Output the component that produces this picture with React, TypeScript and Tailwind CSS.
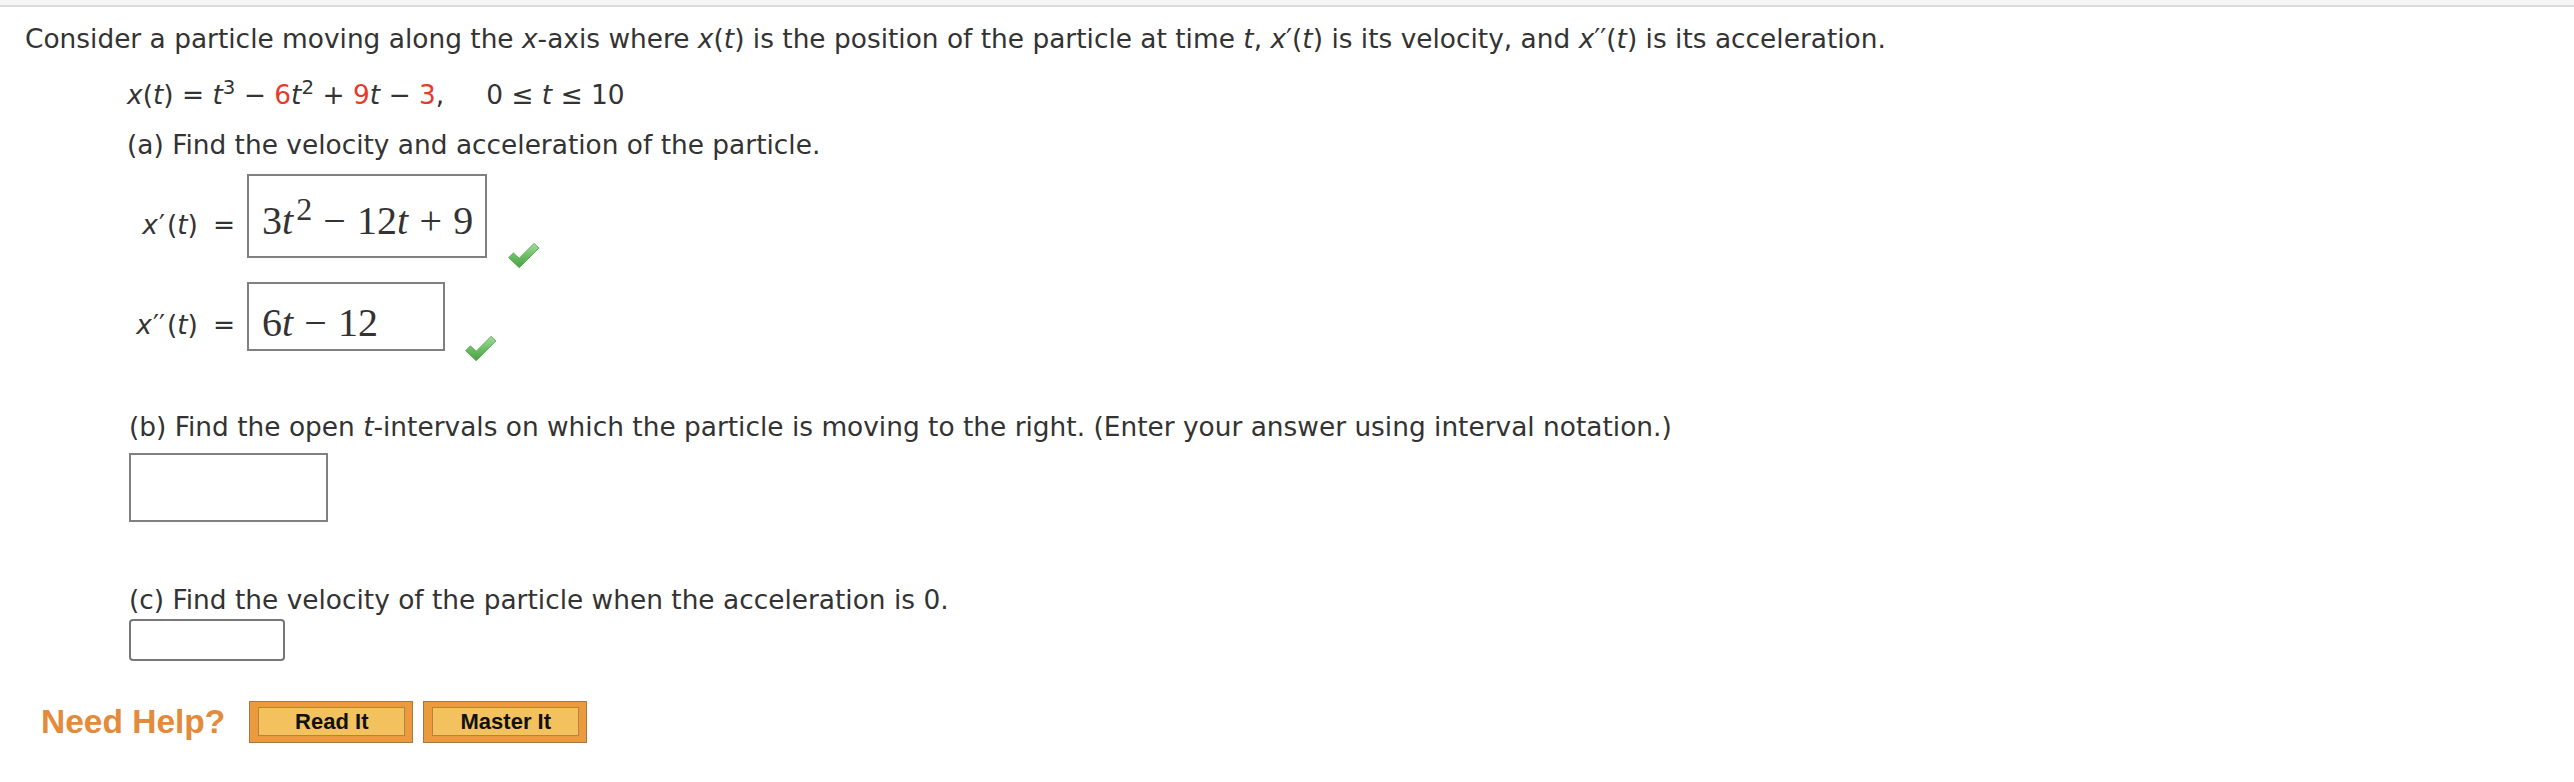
import React from 'react';

const RED = 'text-[#e53b2c]';

const Check: React.FC<{ id: string }> = ({ id }) => (
    <svg width="33" height="28" viewBox="0 0 31 26" className="block">
        <defs>
            <linearGradient id={id} x1="0" y1="0" x2="0" y2="1">
                <stop offset="0" stopColor="#a6dca0" />
                <stop offset="0.5" stopColor="#6cbf63" />
                <stop offset="1" stopColor="#4a9f45" />
            </linearGradient>
        </defs>
        <path d="M1.5 15.5 L6 11 L11.5 16 L25.5 2 L30 6.5 L11.5 25 Z" fill={`url(#${id})`} stroke="#5aa852" strokeWidth="0.8" strokeLinejoin="round" />
    </svg>
);

const Label: React.FC<{ primes: string }> = ({ primes }) => (
    <div className="w-[210px] pt-[17px] text-right leading-[30px]">
        <i>x</i><span className="ml-[1px] mr-[2px]">{primes}</span>(<i>t</i>)<span className="ml-[15px]">=</span>
    </div>
);

const Op: React.FC<{ children: React.ReactNode }> = ({ children }) => <span className="mx-[0.28em]">{children}</span>;

const HelpButton: React.FC<{ label: string }> = ({ label }) => (
    <button className="h-[42px] w-[164px] border border-[#a87646] bg-[#eb9a3e] p-[5px_7px_6px_8px]">
        <span className="flex h-full w-full items-center justify-center border border-[#b98141] bg-[#f3c15e] font-['Liberation_Sans',Arial,sans-serif] text-[22px] leading-none font-bold text-[#111]">
            {label}
        </span>
    </button>
);

export default function App() {
    return (
        <div className="min-h-screen bg-white font-['DejaVu_Sans',Verdana,sans-serif] text-[26.4px] text-[#333]">
            <div className="h-[5px] bg-[#f4f4f4]" />
            <div className="h-[2px] bg-[#dcdcdc]" />

            <div className="pl-[25px]">
                <p className="mt-[17px] leading-[30px]">
                    Consider a particle moving along the <i>x</i>-axis where <i>x</i>(<i>t</i>) is the position of the particle at time <i>t</i>, <i>x</i>′(<i>t</i>) is its velocity, and <i>x</i>′′(<i>t</i>) is its acceleration.
                </p>

                <div className="pl-[102px]">
                    <p className="mt-[26px] leading-[30px]">
                        <i>x</i>(<i>t</i>) = <i>t</i><sup>3</sup> − <span className={RED}>6</span><i>t</i><sup>2</sup> + <span className={RED}>9</span><i>t</i> − <span className={RED}>3</span>,&nbsp;&nbsp;&nbsp;&nbsp; 0 ≤ <i>t</i> ≤ 10
                    </p>
                    <p className="mt-[20px] leading-[30px]">(a) Find the velocity and acceleration of the particle.</p>
                </div>

                <div className="mt-[14px] flex items-center">
                    <Label primes="′" />
                    <div className="ml-[12px] h-[84px] w-[240px] border-2 border-[#808080] pt-[23px] pl-[13px] font-['Liberation_Serif','Times_New_Roman',serif] text-[40px] leading-[44px] whitespace-nowrap text-[#333]">
                        3<i className="mr-[3px]">t</i><span className="relative -top-[14px] text-[32px] leading-none">2</span><Op>−</Op>12<i>t</i><Op>+</Op>9
                    </div>
                    <div className="ml-[20px] -mb-[11px] self-end">
                        <Check id="g1" />
                    </div>
                </div>

                <div className="mt-[24px] flex items-center">
                    <Label primes="′′" />
                    <div className="ml-[12px] h-[69px] w-[198px] border-2 border-[#808080] pt-[17px] pl-[13px] font-['Liberation_Serif','Times_New_Roman',serif] text-[40px] leading-[44px] whitespace-nowrap text-[#333]">
                        6<i>t</i><Op>−</Op>12
                    </div>
                    <div className="ml-[19px] -mb-[11px] self-end">
                        <Check id="g2" />
                    </div>
                </div>

                <div className="pl-[104px]">
                    <p className="mt-[61px] leading-[30px]">
                        (b) Find the open <i>t</i>-intervals on which the particle is moving to the right. (Enter your answer using interval notation.)
                    </p>
                    <div className="mt-[11px] h-[69px] w-[199px] border-2 border-[#808080]" />

                    <p className="mt-[63px] leading-[30px]">(c) Find the velocity of the particle when the acceleration is 0.</p>
                    <div className="mt-[4px] h-[42px] w-[156px] rounded-[4px] border-2 border-[#777]" />
                </div>

                <div className="mt-[36px] flex items-center pl-[16px]">
                    <span className="font-['Liberation_Sans',Arial,sans-serif] text-[33.5px] font-bold text-[#e38a3b]">Need Help?</span>
                    <div className="ml-[24px] flex gap-[10px]">
                        <HelpButton label="Read It" />
                        <HelpButton label="Master It" />
                    </div>
                </div>
            </div>
        </div>
    );
}
